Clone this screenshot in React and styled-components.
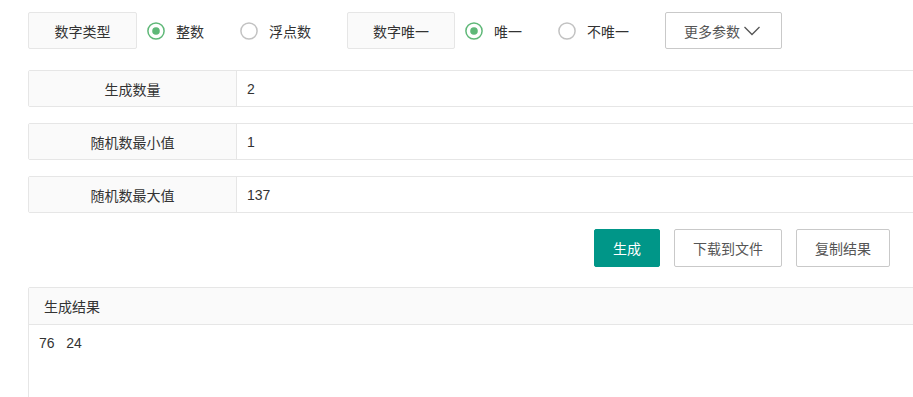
import React from "react";
import styled, { createGlobalStyle } from "styled-components";

const Global = createGlobalStyle`
  html, body { margin: 0; padding: 0; background: #fff; overflow: hidden; }
  body {
    font-family: "Liberation Sans", "Noto Sans CJK SC", Arial, sans-serif;
    font-size: 14px;
    color: #333;
  }
`;

const Page = styled.div`
  padding: 12px 23px 0 28px;
`;

const OptionBar = styled.div`
  display: flex;
  align-items: center;
  height: 37px;
`;

const OptionLabel = styled.div`
  box-sizing: border-box;
  width: ${(p) => p.$w}px;
  height: 37px;
  display: flex;
  align-items: center;
  justify-content: center;
  background: #fafafa;
  border: 1px solid #e6e6e6;
  border-radius: 2px;
  color: #333;
`;

const RadioGroup = styled.div`
  display: flex;
  align-items: center;
  padding-left: 10px;
`;

const RadioItem = styled.label`
  display: flex;
  align-items: center;
  gap: 11px;
  margin-right: 36px;
  color: #333;
  cursor: pointer;
`;

const MoreButton = styled.button`
  box-sizing: border-box;
  height: 37px;
  padding: 0 20px 0 18px;
  display: flex;
  align-items: center;
  gap: 3px;
  background: #fff;
  border: 1px solid #c9c9c9;
  border-radius: 2px;
  color: #555;
  font: inherit;
`;

const Fields = styled.div`
  display: flex;
  flex-direction: column;
  gap: 16px;
  margin-top: 21px;
  margin-right: -40px;
`;

const FieldRow = styled.div`
  box-sizing: border-box;
  display: flex;
  height: 37px;
  border: 1px solid #e6e6e6;
  border-radius: 2px;
`;

const FieldLabel = styled.div`
  box-sizing: border-box;
  width: 208px;
  flex: none;
  display: flex;
  align-items: center;
  justify-content: center;
  background: #fafafa;
  border-right: 1px solid #e6e6e6;
  color: #333;
`;

const FieldValue = styled.div`
  display: flex;
  align-items: center;
  padding-left: 10px;
  color: #333;
`;

const ActionBar = styled.div`
  display: flex;
  justify-content: flex-end;
  gap: 14px;
  margin-top: 16px;
`;

const ActionButton = styled.button`
  box-sizing: border-box;
  height: 38px;
  padding: 0 18px;
  border-radius: 2px;
  font: inherit;
  border: 1px solid ${(p) => (p.$primary ? "#009688" : "#c9c9c9")};
  background: ${(p) => (p.$primary ? "#009688" : "#fff")};
  color: ${(p) => (p.$primary ? "#fff" : "#555")};
`;

const ResultPanel = styled.div`
  box-sizing: border-box;
  margin-top: 20px;
  margin-right: -40px;
  height: 200px;
  border: 1px solid #e6e6e6;
  border-radius: 2px;
`;

const ResultHeader = styled.div`
  height: 36px;
  display: flex;
  align-items: center;
  padding-left: 15px;
  background: #fafafa;
  border-bottom: 1px solid #e6e6e6;
  color: #333;
`;

const ResultBody = styled.div`
  padding: 8px 10px;
  white-space: pre;
  color: #333;
  line-height: 20px;
`;

function RadioIcon({ checked }) {
  return (
    <svg width="18" height="18" viewBox="0 0 18 18">
      <circle
        cx="9"
        cy="9"
        r="8.1"
        fill="#fff"
        stroke={checked ? "#5fb878" : "#c2c2c2"}
        strokeWidth="1.5"
      />
      {checked && <circle cx="9" cy="9" r="3.8" fill="#5fb878" />}
    </svg>
  );
}

function Radio({ checked, children }) {
  return (
    <RadioItem>
      <RadioIcon checked={checked} />
      <span>{children}</span>
    </RadioItem>
  );
}

function Chevron() {
  return (
    <svg width="18" height="12" viewBox="0 0 18 12">
      <polyline
        points="1.5,2 9,9.5 16.5,2"
        fill="none"
        stroke="#555"
        strokeWidth="1.3"
      />
    </svg>
  );
}

export default function App() {
  return (
    <>
      <Global />
      <Page>
        <OptionBar>
          <OptionLabel $w={109}>数字类型</OptionLabel>
          <RadioGroup>
            <Radio checked>整数</Radio>
            <Radio>浮点数</Radio>
          </RadioGroup>
          <OptionLabel $w={108}>数字唯一</OptionLabel>
          <RadioGroup>
            <Radio checked>唯一</Radio>
            <Radio>不唯一</Radio>
          </RadioGroup>
          <MoreButton>
            更多参数
            <Chevron />
          </MoreButton>
        </OptionBar>

        <Fields>
          <FieldRow>
            <FieldLabel>生成数量</FieldLabel>
            <FieldValue>2</FieldValue>
          </FieldRow>
          <FieldRow>
            <FieldLabel>随机数最小值</FieldLabel>
            <FieldValue>1</FieldValue>
          </FieldRow>
          <FieldRow>
            <FieldLabel>随机数最大值</FieldLabel>
            <FieldValue>137</FieldValue>
          </FieldRow>
        </Fields>

        <ActionBar>
          <ActionButton $primary>生成</ActionButton>
          <ActionButton>下载到文件</ActionButton>
          <ActionButton>复制结果</ActionButton>
        </ActionBar>

        <ResultPanel>
          <ResultHeader>生成结果</ResultHeader>
          <ResultBody>{"76   24"}</ResultBody>
        </ResultPanel>
      </Page>
    </>
  );
}
